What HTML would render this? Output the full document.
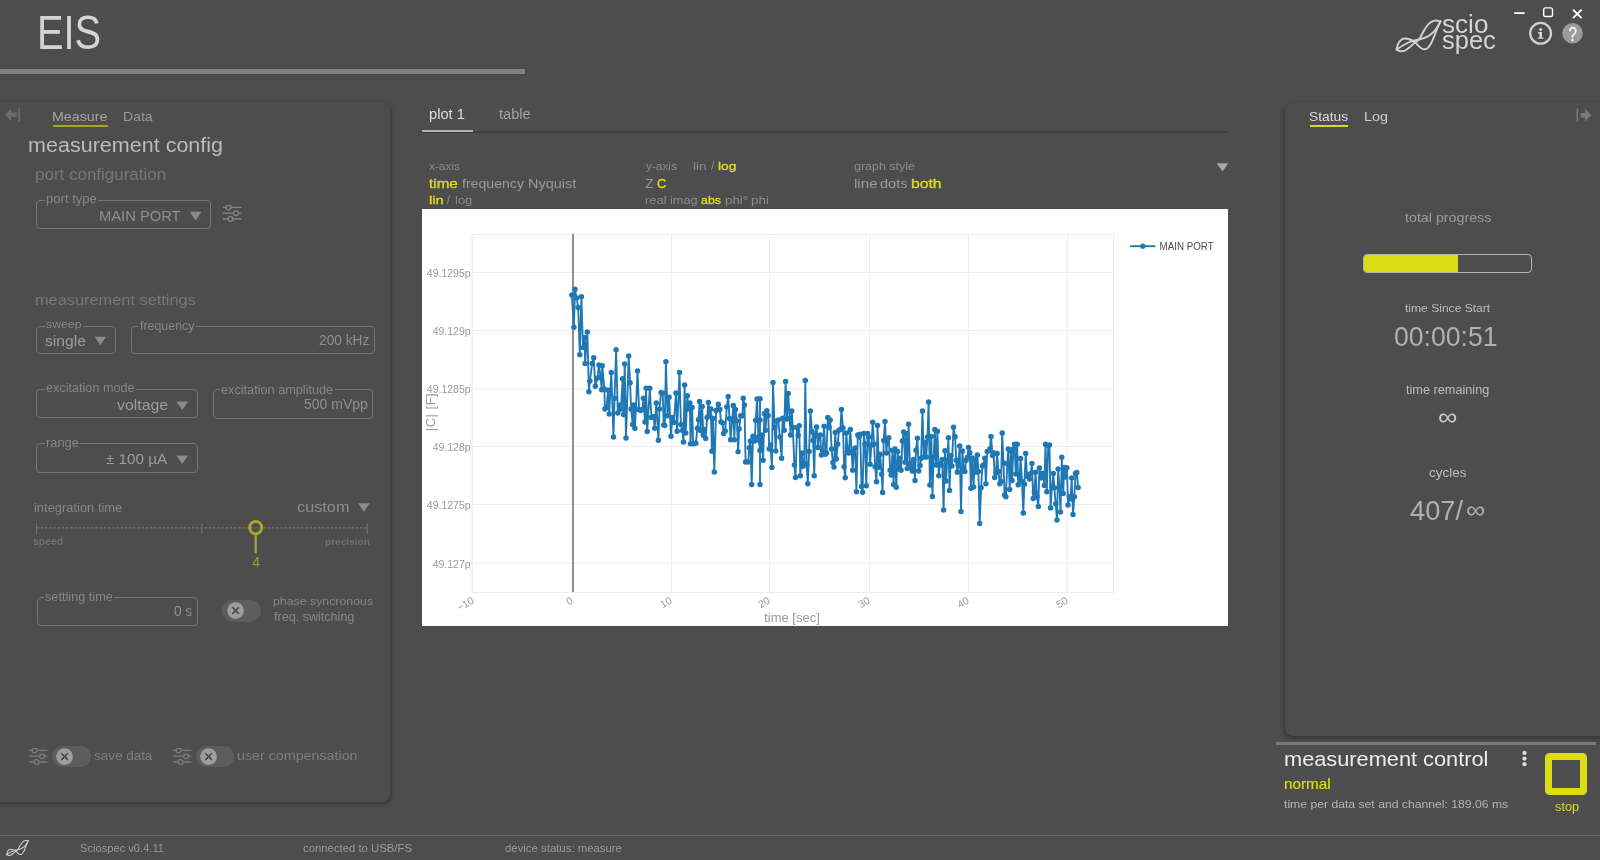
<!DOCTYPE html>
<html><head><meta charset="utf-8"><title>EIS</title>
<style>
*{box-sizing:border-box;margin:0;padding:0}
html,body{width:1600px;height:860px;overflow:hidden;background:#4d4d4d;font-family:"Liberation Sans",sans-serif;color:#bbb}
.a{position:absolute;white-space:nowrap;line-height:1}
.fs{position:absolute;border:1px solid #767676;border-radius:4px}
#w{position:absolute;left:0;top:0;width:1600px;height:860px;overflow:hidden;will-change:transform}
</style></head><body><div id="w">

<!-- header -->
<div class="a" style="left:36.62px;top:8px;font-size:48.5px;color:#d4d4d4;transform-origin:0 0;transform:scaleX(0.8206);">EIS</div>

<div class="a" style="left:-5px;top:69px;width:530px;height:5px;background:#838383;box-shadow:0 0 2px rgba(0,0,0,.25)"></div>

<!-- left panel -->
<div class="a" style="left:-10px;top:102px;width:400px;height:699.5px;background:#4d4d4d;border-radius:8px;box-shadow:1px 2px 5px rgba(0,0,0,.3)"></div>
<svg class="a" style="left:4px;top:107px" width="18" height="16" viewBox="0 0 18 16"><path d="M0.9,7.8L7.2,1.5V5.6H12.5V10H7.2V14.1Z" fill="#6c6c6c"/><path d="M15.1,1.2V14.6" stroke="#6c6c6c" stroke-width="1.6"/></svg>
<div class="a" style="left:52.26px;top:110px;font-size:13.5px;color:#a4a4a4;transform-origin:0 0;transform:scaleX(1.0551);">Measure</div>
<div class="a" style="left:53px;top:124.6px;width:54.5px;height:2px;background:#a9a32a"></div>
<div class="a" style="left:123.38px;top:110px;font-size:13.5px;color:#9a9a9a;transform-origin:0 0;transform:scaleX(1.0400);">Data</div>
<div class="a" style="left:27.60px;top:135px;font-size:20.5px;color:#bcbcbc;transform-origin:0 0;transform:scaleX(1.0504);">measurement config</div>
<div class="a" style="left:35.00px;top:167px;font-size:16.0px;color:#777;transform-origin:0 0;transform:scaleX(1.0607);">port configuration</div>
<div class="fs" style="left:36px;top:200px;width:175px;height:29px;border-color:#767676"></div>
<div class="a" style="left:45.3px;top:199px;width:52.9px;height:3px;background:#4d4d4d"></div>
<div class="a" style="left:46.05px;top:193px;font-size:12.5px;color:#868686;transform-origin:0 0;transform:scaleX(1.0462);">port type</div>
<div class="a" style="left:99.42px;top:208px;font-size:15.5px;color:#8e8e8e;transform-origin:0 0;transform:scaleX(0.9508);">MAIN PORT</div>
<svg class="a" style="left:188px;top:210px" width="15" height="12" viewBox="188 210 15 12"><path d="M189.7,211.7H201.6L195.64999999999998,220.5Z" fill="#8a8a8a"/></svg>
<svg class="a" style="left:222.6px;top:204.8px" width="19" height="17" viewBox="0 0 19 17" fill="none" stroke="#858585" stroke-width="1.3">
<path d="M0,2.4h3M8,2.4H18.5M0,8.2h10.5M15.5,8.2h3M0,14h5M10,14H18.5"/><circle cx="5.5" cy="2.4" r="2.4"/><circle cx="13" cy="8.2" r="2.4"/><circle cx="7.5" cy="14" r="2.4"/></svg>
<div class="a" style="left:35.04px;top:292px;font-size:15.5px;color:#777;transform-origin:0 0;transform:scaleX(1.0545);">measurement settings</div>
<div class="fs" style="left:36px;top:326px;width:80px;height:28px;border-color:#767676"></div>
<div class="a" style="left:45.0px;top:325px;width:38.1px;height:3px;background:#4d4d4d"></div>
<div class="a" style="left:46.29px;top:319px;font-size:11.5px;color:#868686;transform-origin:0 0;transform:scaleX(1.0681);">sweep</div>
<div class="a" style="left:44.81px;top:333px;font-size:15.0px;color:#9c9c9c;transform-origin:0 0;transform:scaleX(1.0452);">single</div>
<svg class="a" style="left:93px;top:335px" width="15" height="12" viewBox="93 335 15 12"><path d="M94.6,336.8H106L100.3,345.3Z" fill="#8a8a8a"/></svg>
<div class="fs" style="left:131px;top:326px;width:244px;height:28px;border-color:#767676"></div>
<div class="a" style="left:138.1px;top:325px;width:57.6px;height:3px;background:#4d4d4d"></div>
<div class="a" style="left:139.51px;top:320px;font-size:12.0px;color:#868686;transform-origin:0 0;transform:scaleX(1.0324);">frequency</div>
<div class="a" style="left:319.01px;top:333px;font-size:14.5px;color:#8e8e8e;transform-origin:0 0;transform:scaleX(0.9466);">200 kHz</div>
<div class="fs" style="left:36px;top:389px;width:162px;height:29px;border-color:#767676"></div>
<div class="a" style="left:45.0px;top:388px;width:91.0px;height:3px;background:#4d4d4d"></div>
<div class="a" style="left:46.09px;top:382px;font-size:12.0px;color:#868686;transform-origin:0 0;transform:scaleX(1.0542);">excitation mode</div>
<div class="a" style="left:116.82px;top:397px;font-size:15.0px;color:#9c9c9c;transform-origin:0 0;transform:scaleX(1.0566);">voltage</div>
<svg class="a" style="left:175px;top:400px" width="15" height="12" viewBox="175 400 15 12"><path d="M176.3,401.4H188.2L182.25,410Z" fill="#8a8a8a"/></svg>
<div class="fs" style="left:213px;top:389px;width:160px;height:30px;border-color:#767676"></div>
<div class="a" style="left:220.3px;top:388px;width:114.5px;height:3px;background:#4d4d4d"></div>
<div class="a" style="left:221.39px;top:384px;font-size:12.0px;color:#868686;transform-origin:0 0;transform:scaleX(1.0575);">excitation amplitude</div>
<div class="a" style="left:303.94px;top:397px;font-size:14.5px;color:#8e8e8e;transform-origin:0 0;transform:scaleX(0.9652);">500 mVpp</div>
<div class="fs" style="left:36px;top:443px;width:162px;height:30px;border-color:#767676"></div>
<div class="a" style="left:45.0px;top:442px;width:34.8px;height:3px;background:#4d4d4d"></div>
<div class="a" style="left:45.77px;top:437px;font-size:12.0px;color:#868686;transform-origin:0 0;transform:scaleX(1.0680);">range</div>
<div class="a" style="left:106.04px;top:451px;font-size:15px;color:#9c9c9c;transform-origin:0 0;transform:scaleX(1.0171);">± 100 µA</div>
<svg class="a" style="left:175px;top:454px" width="15" height="12" viewBox="175 454 15 12"><path d="M176.3,455.5H188.2L182.25,464Z" fill="#8a8a8a"/></svg>
<div class="a" style="left:34.36px;top:502px;font-size:12.5px;color:#868686;transform-origin:0 0;transform:scaleX(1.0330);">integration time</div>
<div class="a" style="left:296.75px;top:499px;font-size:15.5px;color:#8e8e8e;transform-origin:0 0;transform:scaleX(1.0505);">custom</div>
<svg class="a" style="left:357px;top:502px" width="15" height="12" viewBox="357 502 15 12"><path d="M358.2,503.3H369.6L363.9,511.9Z" fill="#8a8a8a"/></svg>
<svg class="a" style="left:30px;top:518px" width="345" height="56" viewBox="30 518 345 56" fill="none">
<path d="M36.6,527.9H367.2" stroke="#757575" stroke-width="1.2" stroke-dasharray="2.4 1.8"/>
<path d="M36.6,523.5v10.5M201.9,523.5v10.5M367.2,523.5v10.5" stroke="#777" stroke-width="1"/>
<path d="M255.7,534.5V553.3" stroke="#a9a628" stroke-width="2.2"/>
<circle cx="255.7" cy="527.6" r="6.1" stroke="#a9a628" stroke-width="2.9"/>
</svg>
<div class="a" style="left:252.30px;top:555px;font-size:14px;color:#a09d2e;transform-origin:0 0;">4</div>
<div class="a" style="left:32.94px;top:537px;font-size:10.0px;color:#6e6e6e;transform-origin:0 0;transform:scaleX(1.0394);font-weight:bold;">speed</div>
<div class="a" style="left:324.74px;top:537px;font-size:9.5px;color:#6e6e6e;transform-origin:0 0;transform:scaleX(1.0648);font-weight:bold;">precision</div>
<div class="fs" style="left:37px;top:597px;width:161px;height:29px;border-color:#767676"></div>
<div class="a" style="left:43.6px;top:596px;width:70.4px;height:3px;background:#4d4d4d"></div>
<div class="a" style="left:44.88px;top:591px;font-size:12.0px;color:#868686;transform-origin:0 0;transform:scaleX(1.0595);">settling time</div>
<div class="a" style="left:173.86px;top:604px;font-size:14.5px;color:#8e8e8e;transform-origin:0 0;transform:scaleX(0.9360);">0 s</div>
<div class="a" style="left:222.4px;top:600.2px;width:38.5px;height:21.6px;border-radius:11px;background:#5d5d5d"></div>
<svg class="a" style="left:226.5px;top:601.9000000000001px" width="18" height="18" viewBox="0 0 18 18"><circle cx="8.6" cy="8.6" r="8.4" fill="#9d9d9d"/><path d="M5.3,5.3l6.6,6.6M11.9,5.3l-6.6,6.6" stroke="#474747" stroke-width="1.6" fill="none"/></svg>
<div class="a" style="left:273.30px;top:596px;font-size:11.5px;color:#868686;transform-origin:0 0;transform:scaleX(1.0719);">phase syncronous</div>
<div class="a" style="left:273.91px;top:611px;font-size:12.0px;color:#868686;transform-origin:0 0;transform:scaleX(1.0478);">freq. switching</div>
<svg class="a" style="left:29.3px;top:747.5px" width="19" height="17" viewBox="0 0 19 17" fill="none" stroke="#7c7c7c" stroke-width="1.3">
<path d="M0,2.4h3M8,2.4H18.5M0,8.2h10.5M15.5,8.2h3M0,14h5M10,14H18.5"/><circle cx="5.5" cy="2.4" r="2.4"/><circle cx="13" cy="8.2" r="2.4"/><circle cx="7.5" cy="14" r="2.4"/></svg>
<div class="a" style="left:52.3px;top:745.9px;width:38.5px;height:21.6px;border-radius:11px;background:#5d5d5d"></div>
<svg class="a" style="left:56.4px;top:747.6px" width="18" height="18" viewBox="0 0 18 18"><circle cx="8.6" cy="8.6" r="8.4" fill="#9d9d9d"/><path d="M5.3,5.3l6.6,6.6M11.9,5.3l-6.6,6.6" stroke="#474747" stroke-width="1.6" fill="none"/></svg>
<div class="a" style="left:94.16px;top:749px;font-size:13.0px;color:#7e7e7e;transform-origin:0 0;transform:scaleX(1.0352);">save data</div>
<svg class="a" style="left:172.8px;top:747.5px" width="19" height="17" viewBox="0 0 19 17" fill="none" stroke="#7c7c7c" stroke-width="1.3">
<path d="M0,2.4h3M8,2.4H18.5M0,8.2h10.5M15.5,8.2h3M0,14h5M10,14H18.5"/><circle cx="5.5" cy="2.4" r="2.4"/><circle cx="13" cy="8.2" r="2.4"/><circle cx="7.5" cy="14" r="2.4"/></svg>
<div class="a" style="left:195.8px;top:745.9px;width:38.5px;height:21.6px;border-radius:11px;background:#5d5d5d"></div>
<svg class="a" style="left:199.9px;top:747.6px" width="18" height="18" viewBox="0 0 18 18"><circle cx="8.6" cy="8.6" r="8.4" fill="#9d9d9d"/><path d="M5.3,5.3l6.6,6.6M11.9,5.3l-6.6,6.6" stroke="#474747" stroke-width="1.6" fill="none"/></svg>
<div class="a" style="left:236.57px;top:749px;font-size:13.5px;color:#7e7e7e;transform-origin:0 0;transform:scaleX(1.0568);">user compensation</div>


<!-- center -->
<div class="a" style="left:429.05px;top:107px;font-size:14.0px;color:#dedede;transform-origin:0 0;transform:scaleX(1.0462);">plot 1</div>
<div class="a" style="left:498.68px;top:107px;font-size:14.0px;color:#a0a0a0;transform-origin:0 0;transform:scaleX(1.0427);">table</div>
<div class="a" style="left:421px;top:131.4px;width:807px;height:1.4px;background:#3d3d3d"></div>
<div class="a" style="left:421.9px;top:130.4px;width:51.3px;height:2px;background:#b0b0b0"></div>
<div class="a" style="left:429.38px;top:161px;font-size:11.5px;color:#8c8c8c;transform-origin:0 0;transform:scaleX(1.0306);">x-axis</div>
<div class="a" style="left:429.27px;top:177px;font-size:13.5px;color:#dcdc1e;transform-origin:0 0;transform:scaleX(1.1303);-webkit-text-stroke:0.35px #dcdc1e;">time</div>
<div class="a" style="left:462.09px;top:177px;font-size:13.5px;color:#9a9a9a;transform-origin:0 0;transform:scaleX(1.0447);">frequency</div>
<div class="a" style="left:527.64px;top:177px;font-size:13.5px;color:#9a9a9a;transform-origin:0 0;transform:scaleX(1.0729);">Nyquist</div>
<div class="a" style="left:428.54px;top:195px;font-size:11.5px;color:#dcdc1e;transform-origin:0 0;transform:scaleX(1.2794);-webkit-text-stroke:0.35px #dcdc1e;">lin</div>
<div class="a" style="left:446.82px;top:194px;font-size:12px;color:#8c8c8c;transform-origin:0 0;">/</div>
<div class="a" style="left:454.76px;top:195px;font-size:11.5px;color:#8c8c8c;transform-origin:0 0;transform:scaleX(1.1283);">log</div>
<div class="a" style="left:645.60px;top:161px;font-size:11.5px;color:#8c8c8c;transform-origin:0 0;transform:scaleX(1.0266);">y-axis</div>
<div class="a" style="left:692.71px;top:161px;font-size:11.5px;color:#8c8c8c;transform-origin:0 0;transform:scaleX(1.1894);">lin</div>
<div class="a" style="left:710.92px;top:160px;font-size:12px;color:#8c8c8c;transform-origin:0 0;">/</div>
<div class="a" style="left:717.91px;top:161px;font-size:11.5px;color:#dcdc1e;transform-origin:0 0;transform:scaleX(1.1930);-webkit-text-stroke:0.35px #dcdc1e;">log</div>
<div class="a" style="left:645.33px;top:177px;font-size:13.5px;color:#9a9a9a;transform-origin:0 0;">Z</div>
<div class="a" style="left:657.02px;top:177px;font-size:13px;color:#dcdc1e;transform-origin:0 0;-webkit-text-stroke:0.35px #dcdc1e;">C</div>
<div class="a" style="left:645.26px;top:195px;font-size:11.5px;color:#8c8c8c;transform-origin:0 0;transform:scaleX(1.1273);">real</div>
<div class="a" style="left:669.97px;top:195px;font-size:11.5px;color:#8c8c8c;transform-origin:0 0;transform:scaleX(1.1125);">imag</div>
<div class="a" style="left:701.20px;top:195px;font-size:11.5px;color:#dcdc1e;transform-origin:0 0;transform:scaleX(1.0763);-webkit-text-stroke:0.35px #dcdc1e;">abs</div>
<div class="a" style="left:724.54px;top:195px;font-size:11.5px;color:#8c8c8c;transform-origin:0 0;transform:scaleX(1.1558);">phi°</div>
<div class="a" style="left:751.12px;top:195px;font-size:11.5px;color:#8c8c8c;transform-origin:0 0;transform:scaleX(1.1739);">phi</div>
<div class="a" style="left:853.50px;top:161px;font-size:11.5px;color:#8c8c8c;transform-origin:0 0;transform:scaleX(1.0847);">graph style</div>
<div class="a" style="left:853.51px;top:177px;font-size:13.5px;color:#9a9a9a;transform-origin:0 0;transform:scaleX(1.1239);">line</div>
<div class="a" style="left:880.42px;top:177px;font-size:13.5px;color:#9a9a9a;transform-origin:0 0;transform:scaleX(1.0815);">dots</div>
<div class="a" style="left:911.48px;top:177px;font-size:13.5px;color:#dcdc1e;transform-origin:0 0;transform:scaleX(1.1631);-webkit-text-stroke:0.35px #dcdc1e;">both</div>
<svg class="a" style="left:1215px;top:162px" width="15" height="12" viewBox="1215 162 15 12"><path d="M1216.8,163.2H1228.2L1222.5,171.6Z" fill="#a8a8a8"/></svg>


<!-- chart -->
<div class="a" style="left:422px;top:208.7px;width:805.5px;height:417.2px;background:#fff"></div>
<svg class="a" style="left:422px;top:209px" width="805" height="417" viewBox="422 209 805 417">
<g stroke="#eeeeee" stroke-width="1" fill="none">
<path d="M470.9,234v358M472.6,234v358M671.5,234v358M769.5,234v358M869.5,234v358M968.5,234v358M1067.5,234v358M1113.5,234v358"/>
<path d="M472,234.5h642M472,272.5h642M472,330.5h642M472,388.5h642M472,446.5h642M472,504.5h642M472,563.5h642M472,592.5h642"/>
</g>
<path d="M573,234v358" stroke="#6c6c6c" stroke-width="1.5" fill="none"/>
<polyline points="571.8,294.9 573.9,327.2 575.0,289.3 576.6,298.1 578.2,307.4 579.8,354.8 581.4,296.7 583.0,347.5 584.6,337.4 585.1,363.6 587.3,332.0 588.9,391.7 589.9,381.0 592.1,363.6 593.7,357.7 595.3,386.3 597.4,378.3 599.0,364.9 600.6,377.0 601.7,389.8 602.2,365.7 604.4,389.0 604.9,409.0 606.5,407.7 608.1,390.3 609.2,413.9 611.3,372.4 613.5,437.1 614.5,398.3 616.1,349.7 617.8,413.0 619.9,405.0 621.0,409.0 622.6,378.8 623.6,414.4 624.7,364.1 626.0,437.9 628.7,356.1 630.1,382.8 631.1,409.0 632.7,424.5 633.8,405.0 634.9,428.3 635.9,409.0 637.5,371.1 639.1,409.8 640.7,410.4 642.4,409.6 643.4,398.3 645.0,421.9 646.1,388.2 647.2,431.5 649.8,388.2 651.4,417.6 653.6,416.5 654.7,428.3 656.3,402.9 658.4,440.3 659.5,409.0 661.1,392.5 662.7,393.0 663.7,425.1 664.8,425.6 665.9,361.7 667.5,415.7 669.1,397.3 671.0,436.3 672.3,417.6 673.9,422.4 676.0,393.0 677.1,431.2 679.5,372.4 680.9,424.5 682.5,430.4 683.5,441.9 684.6,385.0 685.7,433.1 687.3,395.7 688.3,409.0 689.9,402.9 690.5,443.8 692.1,407.4 693.2,443.8 695.8,443.3 697.4,428.3 698.5,419.7 699.6,401.6 700.6,430.4 702.2,406.4 703.3,435.2 704.4,429.6 705.7,438.4 707.1,417.6 708.4,402.4 709.7,415.7 710.8,409.0 711.9,451.3 712.9,418.4 714.3,471.9 716.1,410.4 718.3,404.2 719.9,409.6 721.0,421.9 722.6,422.9 723.6,433.6 725.2,431.0 726.8,406.9 728.2,396.5 729.5,418.4 730.6,439.8 732.2,419.7 733.3,405.6 734.3,439.8 735.4,409.6 737.0,421.1 738.1,451.8 739.1,429.1 740.7,415.7 742.4,415.7 743.2,398.3 744.5,405.0 745.6,462.0 748.2,462.0 749.3,447.8 750.4,441.1 751.7,484.4 753.0,436.3 754.7,441.1 755.7,420.3 757.1,398.9 758.4,437.1 760.0,450.5 760.0,440.9 760.0,484.5 760.0,436.1 760.0,440.9 760.0,420.1 760.0,398.7 760.0,436.9 760.2,450.3 761.8,435.0 763.1,460.2 764.4,413.4 765.5,430.2 766.8,410.7 768.2,415.5 769.3,448.9 770.6,444.9 771.9,467.6 773.0,382.4 774.6,427.5 775.7,451.1 776.7,420.9 778.3,420.1 779.9,436.9 781.6,458.3 782.6,418.2 784.2,430.2 785.6,381.6 786.9,419.0 788.2,393.6 789.6,418.2 790.6,435.0 791.7,411.0 792.8,427.5 794.4,465.0 795.5,477.5 797.1,427.5 798.1,435.6 799.2,425.7 800.3,475.7 801.9,452.9 802.9,466.3 804.3,463.6 805.3,380.5 806.7,465.0 807.8,483.7 809.1,451.6 810.4,411.0 812.0,431.6 813.1,440.4 814.2,475.7 815.2,435.6 816.6,427.0 817.9,447.6 819.0,435.6 820.3,435.0 821.4,455.1 822.7,451.1 824.1,426.2 825.4,454.3 826.5,452.9 827.8,417.4 829.1,427.5 830.2,420.1 831.6,448.9 832.9,462.8 834.0,467.1 835.3,432.4 836.4,459.1 837.7,444.1 839.0,430.2 840.4,429.4 841.4,409.4 843.0,428.1 844.1,466.8 845.2,477.8 846.3,432.9 847.6,451.6 848.9,452.9 850.3,429.4 851.6,451.6 852.7,470.3 853.7,452.9 855.1,448.1 856.4,491.7 857.8,435.0 859.1,436.9 860.2,434.2 861.5,486.4 862.6,492.2 863.9,433.4 865.0,444.1 866.3,485.8 867.6,433.4 868.7,436.9 870.1,464.2 871.4,444.9 872.7,422.2 874.1,444.1 875.1,466.8 876.5,481.8 877.5,425.4 878.9,467.6 880.2,454.3 881.6,474.3 882.6,492.5 883.7,440.4 885.0,421.4 886.4,452.9 887.4,440.9 888.8,437.7 890.1,470.3 891.2,475.1 892.5,450.3 893.6,484.5 894.9,448.9 896.3,487.2 897.6,451.6 898.7,469.0 900.0,458.3 901.1,470.3 902.4,440.9 903.7,432.1 905.1,462.3 906.1,433.4 907.2,468.4 908.6,424.3 909.9,463.6 911.2,467.6 912.3,470.9 913.6,459.6 915.0,480.5 916.0,450.3 917.4,438.2 918.7,471.1 920.1,465.5 921.1,458.3 922.5,411.0 923.8,457.0 925.1,442.2 926.2,457.0 927.5,436.9 928.6,401.9 929.9,485.0 931.3,436.4 932.4,496.5 933.7,457.0 934.8,429.4 936.1,465.0 937.4,431.3 938.8,475.7 939.8,463.6 941.2,465.0 942.2,459.6 943.6,509.9 944.9,450.8 946.0,481.0 947.3,460.2 948.4,437.7 949.5,490.4 950.9,455.4 951.9,466.1 953.5,427.3 955.1,436.7 956.2,460.2 957.3,472.2 958.3,465.0 959.7,446.0 961.0,511.6 962.4,450.9 963.7,468.2 964.8,471.4 966.1,460.2 967.4,457.5 968.5,447.4 969.8,452.7 970.9,488.3 972.2,458.1 973.6,487.0 974.7,459.7 976.0,472.2 977.3,454.9 978.4,471.4 979.7,523.6 981.1,487.8 982.4,466.1 983.5,465.0 984.8,458.3 985.9,483.7 987.2,451.4 988.6,450.9 989.9,449.0 991.0,436.4 992.6,455.4 993.6,452.7 994.7,477.6 996.0,473.0 997.1,453.5 998.4,471.4 999.8,483.7 1001.1,481.6 1002.2,432.9 1003.5,462.9 1004.6,495.0 1005.9,496.8 1007.3,463.7 1008.3,449.0 1009.7,489.6 1011.0,450.9 1012.1,480.5 1013.4,449.0 1014.5,444.2 1015.8,474.1 1017.2,444.2 1018.2,484.8 1019.6,476.8 1020.6,458.6 1022.0,481.6 1023.3,512.9 1024.4,484.3 1025.7,453.5 1027.1,476.3 1028.1,474.9 1029.5,478.9 1030.8,473.6 1031.9,463.4 1033.2,498.4 1034.3,492.3 1035.6,472.2 1037.0,496.8 1038.3,506.5 1039.4,468.0 1040.7,477.9 1041.8,473.6 1043.1,473.6 1044.4,485.6 1045.5,444.2 1046.8,491.8 1048.2,445.5 1049.5,445.0 1050.6,507.8 1051.9,487.0 1053.3,473.6 1054.3,487.8 1055.7,503.8 1057.0,520.1 1058.1,469.0 1059.4,487.0 1060.5,512.1 1061.8,457.3 1063.2,493.6 1064.2,467.4 1065.6,477.1 1066.9,467.7 1068.0,505.1 1069.3,496.8 1070.6,499.0 1071.7,478.1 1073.0,514.5 1074.4,496.8 1075.5,473.6 1076.8,472.5 1078.1,487.5" fill="none" stroke="#1f77b4" stroke-width="1.85" stroke-linejoin="round"/>
<path d="M569.05,294.9a2.75,2.75 0 1,0 5.5,0a2.75,2.75 0 1,0 -5.5,0M571.15,327.2a2.75,2.75 0 1,0 5.5,0a2.75,2.75 0 1,0 -5.5,0M572.25,289.3a2.75,2.75 0 1,0 5.5,0a2.75,2.75 0 1,0 -5.5,0M573.85,298.1a2.75,2.75 0 1,0 5.5,0a2.75,2.75 0 1,0 -5.5,0M575.45,307.4a2.75,2.75 0 1,0 5.5,0a2.75,2.75 0 1,0 -5.5,0M577.05,354.8a2.75,2.75 0 1,0 5.5,0a2.75,2.75 0 1,0 -5.5,0M578.65,296.7a2.75,2.75 0 1,0 5.5,0a2.75,2.75 0 1,0 -5.5,0M580.25,347.5a2.75,2.75 0 1,0 5.5,0a2.75,2.75 0 1,0 -5.5,0M581.85,337.4a2.75,2.75 0 1,0 5.5,0a2.75,2.75 0 1,0 -5.5,0M582.35,363.6a2.75,2.75 0 1,0 5.5,0a2.75,2.75 0 1,0 -5.5,0M584.55,332.0a2.75,2.75 0 1,0 5.5,0a2.75,2.75 0 1,0 -5.5,0M586.15,391.7a2.75,2.75 0 1,0 5.5,0a2.75,2.75 0 1,0 -5.5,0M587.15,381.0a2.75,2.75 0 1,0 5.5,0a2.75,2.75 0 1,0 -5.5,0M589.35,363.6a2.75,2.75 0 1,0 5.5,0a2.75,2.75 0 1,0 -5.5,0M590.95,357.7a2.75,2.75 0 1,0 5.5,0a2.75,2.75 0 1,0 -5.5,0M592.55,386.3a2.75,2.75 0 1,0 5.5,0a2.75,2.75 0 1,0 -5.5,0M594.65,378.3a2.75,2.75 0 1,0 5.5,0a2.75,2.75 0 1,0 -5.5,0M596.25,364.9a2.75,2.75 0 1,0 5.5,0a2.75,2.75 0 1,0 -5.5,0M597.85,377.0a2.75,2.75 0 1,0 5.5,0a2.75,2.75 0 1,0 -5.5,0M598.95,389.8a2.75,2.75 0 1,0 5.5,0a2.75,2.75 0 1,0 -5.5,0M599.45,365.7a2.75,2.75 0 1,0 5.5,0a2.75,2.75 0 1,0 -5.5,0M601.65,389.0a2.75,2.75 0 1,0 5.5,0a2.75,2.75 0 1,0 -5.5,0M602.15,409.0a2.75,2.75 0 1,0 5.5,0a2.75,2.75 0 1,0 -5.5,0M603.75,407.7a2.75,2.75 0 1,0 5.5,0a2.75,2.75 0 1,0 -5.5,0M605.35,390.3a2.75,2.75 0 1,0 5.5,0a2.75,2.75 0 1,0 -5.5,0M606.45,413.9a2.75,2.75 0 1,0 5.5,0a2.75,2.75 0 1,0 -5.5,0M608.55,372.4a2.75,2.75 0 1,0 5.5,0a2.75,2.75 0 1,0 -5.5,0M610.75,437.1a2.75,2.75 0 1,0 5.5,0a2.75,2.75 0 1,0 -5.5,0M611.75,398.3a2.75,2.75 0 1,0 5.5,0a2.75,2.75 0 1,0 -5.5,0M613.35,349.7a2.75,2.75 0 1,0 5.5,0a2.75,2.75 0 1,0 -5.5,0M615.05,413.0a2.75,2.75 0 1,0 5.5,0a2.75,2.75 0 1,0 -5.5,0M617.15,405.0a2.75,2.75 0 1,0 5.5,0a2.75,2.75 0 1,0 -5.5,0M618.25,409.0a2.75,2.75 0 1,0 5.5,0a2.75,2.75 0 1,0 -5.5,0M619.85,378.8a2.75,2.75 0 1,0 5.5,0a2.75,2.75 0 1,0 -5.5,0M620.85,414.4a2.75,2.75 0 1,0 5.5,0a2.75,2.75 0 1,0 -5.5,0M621.95,364.1a2.75,2.75 0 1,0 5.5,0a2.75,2.75 0 1,0 -5.5,0M623.25,437.9a2.75,2.75 0 1,0 5.5,0a2.75,2.75 0 1,0 -5.5,0M625.95,356.1a2.75,2.75 0 1,0 5.5,0a2.75,2.75 0 1,0 -5.5,0M627.35,382.8a2.75,2.75 0 1,0 5.5,0a2.75,2.75 0 1,0 -5.5,0M628.35,409.0a2.75,2.75 0 1,0 5.5,0a2.75,2.75 0 1,0 -5.5,0M629.95,424.5a2.75,2.75 0 1,0 5.5,0a2.75,2.75 0 1,0 -5.5,0M631.05,405.0a2.75,2.75 0 1,0 5.5,0a2.75,2.75 0 1,0 -5.5,0M632.15,428.3a2.75,2.75 0 1,0 5.5,0a2.75,2.75 0 1,0 -5.5,0M633.15,409.0a2.75,2.75 0 1,0 5.5,0a2.75,2.75 0 1,0 -5.5,0M634.75,371.1a2.75,2.75 0 1,0 5.5,0a2.75,2.75 0 1,0 -5.5,0M636.35,409.8a2.75,2.75 0 1,0 5.5,0a2.75,2.75 0 1,0 -5.5,0M637.95,410.4a2.75,2.75 0 1,0 5.5,0a2.75,2.75 0 1,0 -5.5,0M639.65,409.6a2.75,2.75 0 1,0 5.5,0a2.75,2.75 0 1,0 -5.5,0M640.65,398.3a2.75,2.75 0 1,0 5.5,0a2.75,2.75 0 1,0 -5.5,0M642.25,421.9a2.75,2.75 0 1,0 5.5,0a2.75,2.75 0 1,0 -5.5,0M643.35,388.2a2.75,2.75 0 1,0 5.5,0a2.75,2.75 0 1,0 -5.5,0M644.45,431.5a2.75,2.75 0 1,0 5.5,0a2.75,2.75 0 1,0 -5.5,0M647.05,388.2a2.75,2.75 0 1,0 5.5,0a2.75,2.75 0 1,0 -5.5,0M648.65,417.6a2.75,2.75 0 1,0 5.5,0a2.75,2.75 0 1,0 -5.5,0M650.85,416.5a2.75,2.75 0 1,0 5.5,0a2.75,2.75 0 1,0 -5.5,0M651.95,428.3a2.75,2.75 0 1,0 5.5,0a2.75,2.75 0 1,0 -5.5,0M653.55,402.9a2.75,2.75 0 1,0 5.5,0a2.75,2.75 0 1,0 -5.5,0M655.65,440.3a2.75,2.75 0 1,0 5.5,0a2.75,2.75 0 1,0 -5.5,0M656.75,409.0a2.75,2.75 0 1,0 5.5,0a2.75,2.75 0 1,0 -5.5,0M658.35,392.5a2.75,2.75 0 1,0 5.5,0a2.75,2.75 0 1,0 -5.5,0M659.95,393.0a2.75,2.75 0 1,0 5.5,0a2.75,2.75 0 1,0 -5.5,0M660.95,425.1a2.75,2.75 0 1,0 5.5,0a2.75,2.75 0 1,0 -5.5,0M662.05,425.6a2.75,2.75 0 1,0 5.5,0a2.75,2.75 0 1,0 -5.5,0M663.15,361.7a2.75,2.75 0 1,0 5.5,0a2.75,2.75 0 1,0 -5.5,0M664.75,415.7a2.75,2.75 0 1,0 5.5,0a2.75,2.75 0 1,0 -5.5,0M666.35,397.3a2.75,2.75 0 1,0 5.5,0a2.75,2.75 0 1,0 -5.5,0M668.25,436.3a2.75,2.75 0 1,0 5.5,0a2.75,2.75 0 1,0 -5.5,0M669.55,417.6a2.75,2.75 0 1,0 5.5,0a2.75,2.75 0 1,0 -5.5,0M671.15,422.4a2.75,2.75 0 1,0 5.5,0a2.75,2.75 0 1,0 -5.5,0M673.25,393.0a2.75,2.75 0 1,0 5.5,0a2.75,2.75 0 1,0 -5.5,0M674.35,431.2a2.75,2.75 0 1,0 5.5,0a2.75,2.75 0 1,0 -5.5,0M676.75,372.4a2.75,2.75 0 1,0 5.5,0a2.75,2.75 0 1,0 -5.5,0M678.15,424.5a2.75,2.75 0 1,0 5.5,0a2.75,2.75 0 1,0 -5.5,0M679.75,430.4a2.75,2.75 0 1,0 5.5,0a2.75,2.75 0 1,0 -5.5,0M680.75,441.9a2.75,2.75 0 1,0 5.5,0a2.75,2.75 0 1,0 -5.5,0M681.85,385.0a2.75,2.75 0 1,0 5.5,0a2.75,2.75 0 1,0 -5.5,0M682.95,433.1a2.75,2.75 0 1,0 5.5,0a2.75,2.75 0 1,0 -5.5,0M684.55,395.7a2.75,2.75 0 1,0 5.5,0a2.75,2.75 0 1,0 -5.5,0M685.55,409.0a2.75,2.75 0 1,0 5.5,0a2.75,2.75 0 1,0 -5.5,0M687.15,402.9a2.75,2.75 0 1,0 5.5,0a2.75,2.75 0 1,0 -5.5,0M687.75,443.8a2.75,2.75 0 1,0 5.5,0a2.75,2.75 0 1,0 -5.5,0M689.35,407.4a2.75,2.75 0 1,0 5.5,0a2.75,2.75 0 1,0 -5.5,0M690.45,443.8a2.75,2.75 0 1,0 5.5,0a2.75,2.75 0 1,0 -5.5,0M693.05,443.3a2.75,2.75 0 1,0 5.5,0a2.75,2.75 0 1,0 -5.5,0M694.65,428.3a2.75,2.75 0 1,0 5.5,0a2.75,2.75 0 1,0 -5.5,0M695.75,419.7a2.75,2.75 0 1,0 5.5,0a2.75,2.75 0 1,0 -5.5,0M696.85,401.6a2.75,2.75 0 1,0 5.5,0a2.75,2.75 0 1,0 -5.5,0M697.85,430.4a2.75,2.75 0 1,0 5.5,0a2.75,2.75 0 1,0 -5.5,0M699.45,406.4a2.75,2.75 0 1,0 5.5,0a2.75,2.75 0 1,0 -5.5,0M700.55,435.2a2.75,2.75 0 1,0 5.5,0a2.75,2.75 0 1,0 -5.5,0M701.65,429.6a2.75,2.75 0 1,0 5.5,0a2.75,2.75 0 1,0 -5.5,0M702.95,438.4a2.75,2.75 0 1,0 5.5,0a2.75,2.75 0 1,0 -5.5,0M704.35,417.6a2.75,2.75 0 1,0 5.5,0a2.75,2.75 0 1,0 -5.5,0M705.65,402.4a2.75,2.75 0 1,0 5.5,0a2.75,2.75 0 1,0 -5.5,0M706.95,415.7a2.75,2.75 0 1,0 5.5,0a2.75,2.75 0 1,0 -5.5,0M708.05,409.0a2.75,2.75 0 1,0 5.5,0a2.75,2.75 0 1,0 -5.5,0M709.15,451.3a2.75,2.75 0 1,0 5.5,0a2.75,2.75 0 1,0 -5.5,0M710.15,418.4a2.75,2.75 0 1,0 5.5,0a2.75,2.75 0 1,0 -5.5,0M711.55,471.9a2.75,2.75 0 1,0 5.5,0a2.75,2.75 0 1,0 -5.5,0M713.35,410.4a2.75,2.75 0 1,0 5.5,0a2.75,2.75 0 1,0 -5.5,0M715.55,404.2a2.75,2.75 0 1,0 5.5,0a2.75,2.75 0 1,0 -5.5,0M717.15,409.6a2.75,2.75 0 1,0 5.5,0a2.75,2.75 0 1,0 -5.5,0M718.25,421.9a2.75,2.75 0 1,0 5.5,0a2.75,2.75 0 1,0 -5.5,0M719.85,422.9a2.75,2.75 0 1,0 5.5,0a2.75,2.75 0 1,0 -5.5,0M720.85,433.6a2.75,2.75 0 1,0 5.5,0a2.75,2.75 0 1,0 -5.5,0M722.45,431.0a2.75,2.75 0 1,0 5.5,0a2.75,2.75 0 1,0 -5.5,0M724.05,406.9a2.75,2.75 0 1,0 5.5,0a2.75,2.75 0 1,0 -5.5,0M725.45,396.5a2.75,2.75 0 1,0 5.5,0a2.75,2.75 0 1,0 -5.5,0M726.75,418.4a2.75,2.75 0 1,0 5.5,0a2.75,2.75 0 1,0 -5.5,0M727.85,439.8a2.75,2.75 0 1,0 5.5,0a2.75,2.75 0 1,0 -5.5,0M729.45,419.7a2.75,2.75 0 1,0 5.5,0a2.75,2.75 0 1,0 -5.5,0M730.55,405.6a2.75,2.75 0 1,0 5.5,0a2.75,2.75 0 1,0 -5.5,0M731.55,439.8a2.75,2.75 0 1,0 5.5,0a2.75,2.75 0 1,0 -5.5,0M732.65,409.6a2.75,2.75 0 1,0 5.5,0a2.75,2.75 0 1,0 -5.5,0M734.25,421.1a2.75,2.75 0 1,0 5.5,0a2.75,2.75 0 1,0 -5.5,0M735.35,451.8a2.75,2.75 0 1,0 5.5,0a2.75,2.75 0 1,0 -5.5,0M736.35,429.1a2.75,2.75 0 1,0 5.5,0a2.75,2.75 0 1,0 -5.5,0M737.95,415.7a2.75,2.75 0 1,0 5.5,0a2.75,2.75 0 1,0 -5.5,0M739.65,415.7a2.75,2.75 0 1,0 5.5,0a2.75,2.75 0 1,0 -5.5,0M740.45,398.3a2.75,2.75 0 1,0 5.5,0a2.75,2.75 0 1,0 -5.5,0M741.75,405.0a2.75,2.75 0 1,0 5.5,0a2.75,2.75 0 1,0 -5.5,0M742.85,462.0a2.75,2.75 0 1,0 5.5,0a2.75,2.75 0 1,0 -5.5,0M745.45,462.0a2.75,2.75 0 1,0 5.5,0a2.75,2.75 0 1,0 -5.5,0M746.55,447.8a2.75,2.75 0 1,0 5.5,0a2.75,2.75 0 1,0 -5.5,0M747.65,441.1a2.75,2.75 0 1,0 5.5,0a2.75,2.75 0 1,0 -5.5,0M748.95,484.4a2.75,2.75 0 1,0 5.5,0a2.75,2.75 0 1,0 -5.5,0M750.25,436.3a2.75,2.75 0 1,0 5.5,0a2.75,2.75 0 1,0 -5.5,0M751.95,441.1a2.75,2.75 0 1,0 5.5,0a2.75,2.75 0 1,0 -5.5,0M752.95,420.3a2.75,2.75 0 1,0 5.5,0a2.75,2.75 0 1,0 -5.5,0M754.35,398.9a2.75,2.75 0 1,0 5.5,0a2.75,2.75 0 1,0 -5.5,0M755.65,437.1a2.75,2.75 0 1,0 5.5,0a2.75,2.75 0 1,0 -5.5,0M757.25,450.5a2.75,2.75 0 1,0 5.5,0a2.75,2.75 0 1,0 -5.5,0M757.25,440.9a2.75,2.75 0 1,0 5.5,0a2.75,2.75 0 1,0 -5.5,0M757.25,484.5a2.75,2.75 0 1,0 5.5,0a2.75,2.75 0 1,0 -5.5,0M757.25,436.1a2.75,2.75 0 1,0 5.5,0a2.75,2.75 0 1,0 -5.5,0M757.25,440.9a2.75,2.75 0 1,0 5.5,0a2.75,2.75 0 1,0 -5.5,0M757.25,420.1a2.75,2.75 0 1,0 5.5,0a2.75,2.75 0 1,0 -5.5,0M757.25,398.7a2.75,2.75 0 1,0 5.5,0a2.75,2.75 0 1,0 -5.5,0M757.25,436.9a2.75,2.75 0 1,0 5.5,0a2.75,2.75 0 1,0 -5.5,0M757.45,450.3a2.75,2.75 0 1,0 5.5,0a2.75,2.75 0 1,0 -5.5,0M759.05,435.0a2.75,2.75 0 1,0 5.5,0a2.75,2.75 0 1,0 -5.5,0M760.35,460.2a2.75,2.75 0 1,0 5.5,0a2.75,2.75 0 1,0 -5.5,0M761.65,413.4a2.75,2.75 0 1,0 5.5,0a2.75,2.75 0 1,0 -5.5,0M762.75,430.2a2.75,2.75 0 1,0 5.5,0a2.75,2.75 0 1,0 -5.5,0M764.05,410.7a2.75,2.75 0 1,0 5.5,0a2.75,2.75 0 1,0 -5.5,0M765.45,415.5a2.75,2.75 0 1,0 5.5,0a2.75,2.75 0 1,0 -5.5,0M766.55,448.9a2.75,2.75 0 1,0 5.5,0a2.75,2.75 0 1,0 -5.5,0M767.85,444.9a2.75,2.75 0 1,0 5.5,0a2.75,2.75 0 1,0 -5.5,0M769.15,467.6a2.75,2.75 0 1,0 5.5,0a2.75,2.75 0 1,0 -5.5,0M770.25,382.4a2.75,2.75 0 1,0 5.5,0a2.75,2.75 0 1,0 -5.5,0M771.85,427.5a2.75,2.75 0 1,0 5.5,0a2.75,2.75 0 1,0 -5.5,0M772.95,451.1a2.75,2.75 0 1,0 5.5,0a2.75,2.75 0 1,0 -5.5,0M773.95,420.9a2.75,2.75 0 1,0 5.5,0a2.75,2.75 0 1,0 -5.5,0M775.55,420.1a2.75,2.75 0 1,0 5.5,0a2.75,2.75 0 1,0 -5.5,0M777.15,436.9a2.75,2.75 0 1,0 5.5,0a2.75,2.75 0 1,0 -5.5,0M778.85,458.3a2.75,2.75 0 1,0 5.5,0a2.75,2.75 0 1,0 -5.5,0M779.85,418.2a2.75,2.75 0 1,0 5.5,0a2.75,2.75 0 1,0 -5.5,0M781.45,430.2a2.75,2.75 0 1,0 5.5,0a2.75,2.75 0 1,0 -5.5,0M782.85,381.6a2.75,2.75 0 1,0 5.5,0a2.75,2.75 0 1,0 -5.5,0M784.15,419.0a2.75,2.75 0 1,0 5.5,0a2.75,2.75 0 1,0 -5.5,0M785.45,393.6a2.75,2.75 0 1,0 5.5,0a2.75,2.75 0 1,0 -5.5,0M786.85,418.2a2.75,2.75 0 1,0 5.5,0a2.75,2.75 0 1,0 -5.5,0M787.85,435.0a2.75,2.75 0 1,0 5.5,0a2.75,2.75 0 1,0 -5.5,0M788.95,411.0a2.75,2.75 0 1,0 5.5,0a2.75,2.75 0 1,0 -5.5,0M790.05,427.5a2.75,2.75 0 1,0 5.5,0a2.75,2.75 0 1,0 -5.5,0M791.65,465.0a2.75,2.75 0 1,0 5.5,0a2.75,2.75 0 1,0 -5.5,0M792.75,477.5a2.75,2.75 0 1,0 5.5,0a2.75,2.75 0 1,0 -5.5,0M794.35,427.5a2.75,2.75 0 1,0 5.5,0a2.75,2.75 0 1,0 -5.5,0M795.35,435.6a2.75,2.75 0 1,0 5.5,0a2.75,2.75 0 1,0 -5.5,0M796.45,425.7a2.75,2.75 0 1,0 5.5,0a2.75,2.75 0 1,0 -5.5,0M797.55,475.7a2.75,2.75 0 1,0 5.5,0a2.75,2.75 0 1,0 -5.5,0M799.15,452.9a2.75,2.75 0 1,0 5.5,0a2.75,2.75 0 1,0 -5.5,0M800.15,466.3a2.75,2.75 0 1,0 5.5,0a2.75,2.75 0 1,0 -5.5,0M801.55,463.6a2.75,2.75 0 1,0 5.5,0a2.75,2.75 0 1,0 -5.5,0M802.55,380.5a2.75,2.75 0 1,0 5.5,0a2.75,2.75 0 1,0 -5.5,0M803.95,465.0a2.75,2.75 0 1,0 5.5,0a2.75,2.75 0 1,0 -5.5,0M805.05,483.7a2.75,2.75 0 1,0 5.5,0a2.75,2.75 0 1,0 -5.5,0M806.35,451.6a2.75,2.75 0 1,0 5.5,0a2.75,2.75 0 1,0 -5.5,0M807.65,411.0a2.75,2.75 0 1,0 5.5,0a2.75,2.75 0 1,0 -5.5,0M809.25,431.6a2.75,2.75 0 1,0 5.5,0a2.75,2.75 0 1,0 -5.5,0M810.35,440.4a2.75,2.75 0 1,0 5.5,0a2.75,2.75 0 1,0 -5.5,0M811.45,475.7a2.75,2.75 0 1,0 5.5,0a2.75,2.75 0 1,0 -5.5,0M812.45,435.6a2.75,2.75 0 1,0 5.5,0a2.75,2.75 0 1,0 -5.5,0M813.85,427.0a2.75,2.75 0 1,0 5.5,0a2.75,2.75 0 1,0 -5.5,0M815.15,447.6a2.75,2.75 0 1,0 5.5,0a2.75,2.75 0 1,0 -5.5,0M816.25,435.6a2.75,2.75 0 1,0 5.5,0a2.75,2.75 0 1,0 -5.5,0M817.55,435.0a2.75,2.75 0 1,0 5.5,0a2.75,2.75 0 1,0 -5.5,0M818.65,455.1a2.75,2.75 0 1,0 5.5,0a2.75,2.75 0 1,0 -5.5,0M819.95,451.1a2.75,2.75 0 1,0 5.5,0a2.75,2.75 0 1,0 -5.5,0M821.35,426.2a2.75,2.75 0 1,0 5.5,0a2.75,2.75 0 1,0 -5.5,0M822.65,454.3a2.75,2.75 0 1,0 5.5,0a2.75,2.75 0 1,0 -5.5,0M823.75,452.9a2.75,2.75 0 1,0 5.5,0a2.75,2.75 0 1,0 -5.5,0M825.05,417.4a2.75,2.75 0 1,0 5.5,0a2.75,2.75 0 1,0 -5.5,0M826.35,427.5a2.75,2.75 0 1,0 5.5,0a2.75,2.75 0 1,0 -5.5,0M827.45,420.1a2.75,2.75 0 1,0 5.5,0a2.75,2.75 0 1,0 -5.5,0M828.85,448.9a2.75,2.75 0 1,0 5.5,0a2.75,2.75 0 1,0 -5.5,0M830.15,462.8a2.75,2.75 0 1,0 5.5,0a2.75,2.75 0 1,0 -5.5,0M831.25,467.1a2.75,2.75 0 1,0 5.5,0a2.75,2.75 0 1,0 -5.5,0M832.55,432.4a2.75,2.75 0 1,0 5.5,0a2.75,2.75 0 1,0 -5.5,0M833.65,459.1a2.75,2.75 0 1,0 5.5,0a2.75,2.75 0 1,0 -5.5,0M834.95,444.1a2.75,2.75 0 1,0 5.5,0a2.75,2.75 0 1,0 -5.5,0M836.25,430.2a2.75,2.75 0 1,0 5.5,0a2.75,2.75 0 1,0 -5.5,0M837.65,429.4a2.75,2.75 0 1,0 5.5,0a2.75,2.75 0 1,0 -5.5,0M838.65,409.4a2.75,2.75 0 1,0 5.5,0a2.75,2.75 0 1,0 -5.5,0M840.25,428.1a2.75,2.75 0 1,0 5.5,0a2.75,2.75 0 1,0 -5.5,0M841.35,466.8a2.75,2.75 0 1,0 5.5,0a2.75,2.75 0 1,0 -5.5,0M842.45,477.8a2.75,2.75 0 1,0 5.5,0a2.75,2.75 0 1,0 -5.5,0M843.55,432.9a2.75,2.75 0 1,0 5.5,0a2.75,2.75 0 1,0 -5.5,0M844.85,451.6a2.75,2.75 0 1,0 5.5,0a2.75,2.75 0 1,0 -5.5,0M846.15,452.9a2.75,2.75 0 1,0 5.5,0a2.75,2.75 0 1,0 -5.5,0M847.55,429.4a2.75,2.75 0 1,0 5.5,0a2.75,2.75 0 1,0 -5.5,0M848.85,451.6a2.75,2.75 0 1,0 5.5,0a2.75,2.75 0 1,0 -5.5,0M849.95,470.3a2.75,2.75 0 1,0 5.5,0a2.75,2.75 0 1,0 -5.5,0M850.95,452.9a2.75,2.75 0 1,0 5.5,0a2.75,2.75 0 1,0 -5.5,0M852.35,448.1a2.75,2.75 0 1,0 5.5,0a2.75,2.75 0 1,0 -5.5,0M853.65,491.7a2.75,2.75 0 1,0 5.5,0a2.75,2.75 0 1,0 -5.5,0M855.05,435.0a2.75,2.75 0 1,0 5.5,0a2.75,2.75 0 1,0 -5.5,0M856.35,436.9a2.75,2.75 0 1,0 5.5,0a2.75,2.75 0 1,0 -5.5,0M857.45,434.2a2.75,2.75 0 1,0 5.5,0a2.75,2.75 0 1,0 -5.5,0M858.75,486.4a2.75,2.75 0 1,0 5.5,0a2.75,2.75 0 1,0 -5.5,0M859.85,492.2a2.75,2.75 0 1,0 5.5,0a2.75,2.75 0 1,0 -5.5,0M861.15,433.4a2.75,2.75 0 1,0 5.5,0a2.75,2.75 0 1,0 -5.5,0M862.25,444.1a2.75,2.75 0 1,0 5.5,0a2.75,2.75 0 1,0 -5.5,0M863.55,485.8a2.75,2.75 0 1,0 5.5,0a2.75,2.75 0 1,0 -5.5,0M864.85,433.4a2.75,2.75 0 1,0 5.5,0a2.75,2.75 0 1,0 -5.5,0M865.95,436.9a2.75,2.75 0 1,0 5.5,0a2.75,2.75 0 1,0 -5.5,0M867.35,464.2a2.75,2.75 0 1,0 5.5,0a2.75,2.75 0 1,0 -5.5,0M868.65,444.9a2.75,2.75 0 1,0 5.5,0a2.75,2.75 0 1,0 -5.5,0M869.95,422.2a2.75,2.75 0 1,0 5.5,0a2.75,2.75 0 1,0 -5.5,0M871.35,444.1a2.75,2.75 0 1,0 5.5,0a2.75,2.75 0 1,0 -5.5,0M872.35,466.8a2.75,2.75 0 1,0 5.5,0a2.75,2.75 0 1,0 -5.5,0M873.75,481.8a2.75,2.75 0 1,0 5.5,0a2.75,2.75 0 1,0 -5.5,0M874.75,425.4a2.75,2.75 0 1,0 5.5,0a2.75,2.75 0 1,0 -5.5,0M876.15,467.6a2.75,2.75 0 1,0 5.5,0a2.75,2.75 0 1,0 -5.5,0M877.45,454.3a2.75,2.75 0 1,0 5.5,0a2.75,2.75 0 1,0 -5.5,0M878.85,474.3a2.75,2.75 0 1,0 5.5,0a2.75,2.75 0 1,0 -5.5,0M879.85,492.5a2.75,2.75 0 1,0 5.5,0a2.75,2.75 0 1,0 -5.5,0M880.95,440.4a2.75,2.75 0 1,0 5.5,0a2.75,2.75 0 1,0 -5.5,0M882.25,421.4a2.75,2.75 0 1,0 5.5,0a2.75,2.75 0 1,0 -5.5,0M883.65,452.9a2.75,2.75 0 1,0 5.5,0a2.75,2.75 0 1,0 -5.5,0M884.65,440.9a2.75,2.75 0 1,0 5.5,0a2.75,2.75 0 1,0 -5.5,0M886.05,437.7a2.75,2.75 0 1,0 5.5,0a2.75,2.75 0 1,0 -5.5,0M887.35,470.3a2.75,2.75 0 1,0 5.5,0a2.75,2.75 0 1,0 -5.5,0M888.45,475.1a2.75,2.75 0 1,0 5.5,0a2.75,2.75 0 1,0 -5.5,0M889.75,450.3a2.75,2.75 0 1,0 5.5,0a2.75,2.75 0 1,0 -5.5,0M890.85,484.5a2.75,2.75 0 1,0 5.5,0a2.75,2.75 0 1,0 -5.5,0M892.15,448.9a2.75,2.75 0 1,0 5.5,0a2.75,2.75 0 1,0 -5.5,0M893.55,487.2a2.75,2.75 0 1,0 5.5,0a2.75,2.75 0 1,0 -5.5,0M894.85,451.6a2.75,2.75 0 1,0 5.5,0a2.75,2.75 0 1,0 -5.5,0M895.95,469.0a2.75,2.75 0 1,0 5.5,0a2.75,2.75 0 1,0 -5.5,0M897.25,458.3a2.75,2.75 0 1,0 5.5,0a2.75,2.75 0 1,0 -5.5,0M898.35,470.3a2.75,2.75 0 1,0 5.5,0a2.75,2.75 0 1,0 -5.5,0M899.65,440.9a2.75,2.75 0 1,0 5.5,0a2.75,2.75 0 1,0 -5.5,0M900.95,432.1a2.75,2.75 0 1,0 5.5,0a2.75,2.75 0 1,0 -5.5,0M902.35,462.3a2.75,2.75 0 1,0 5.5,0a2.75,2.75 0 1,0 -5.5,0M903.35,433.4a2.75,2.75 0 1,0 5.5,0a2.75,2.75 0 1,0 -5.5,0M904.45,468.4a2.75,2.75 0 1,0 5.5,0a2.75,2.75 0 1,0 -5.5,0M905.85,424.3a2.75,2.75 0 1,0 5.5,0a2.75,2.75 0 1,0 -5.5,0M907.15,463.6a2.75,2.75 0 1,0 5.5,0a2.75,2.75 0 1,0 -5.5,0M908.45,467.6a2.75,2.75 0 1,0 5.5,0a2.75,2.75 0 1,0 -5.5,0M909.55,470.9a2.75,2.75 0 1,0 5.5,0a2.75,2.75 0 1,0 -5.5,0M910.85,459.6a2.75,2.75 0 1,0 5.5,0a2.75,2.75 0 1,0 -5.5,0M912.25,480.5a2.75,2.75 0 1,0 5.5,0a2.75,2.75 0 1,0 -5.5,0M913.25,450.3a2.75,2.75 0 1,0 5.5,0a2.75,2.75 0 1,0 -5.5,0M914.65,438.2a2.75,2.75 0 1,0 5.5,0a2.75,2.75 0 1,0 -5.5,0M915.95,471.1a2.75,2.75 0 1,0 5.5,0a2.75,2.75 0 1,0 -5.5,0M917.35,465.5a2.75,2.75 0 1,0 5.5,0a2.75,2.75 0 1,0 -5.5,0M918.35,458.3a2.75,2.75 0 1,0 5.5,0a2.75,2.75 0 1,0 -5.5,0M919.75,411.0a2.75,2.75 0 1,0 5.5,0a2.75,2.75 0 1,0 -5.5,0M921.05,457.0a2.75,2.75 0 1,0 5.5,0a2.75,2.75 0 1,0 -5.5,0M922.35,442.2a2.75,2.75 0 1,0 5.5,0a2.75,2.75 0 1,0 -5.5,0M923.45,457.0a2.75,2.75 0 1,0 5.5,0a2.75,2.75 0 1,0 -5.5,0M924.75,436.9a2.75,2.75 0 1,0 5.5,0a2.75,2.75 0 1,0 -5.5,0M925.85,401.9a2.75,2.75 0 1,0 5.5,0a2.75,2.75 0 1,0 -5.5,0M927.15,485.0a2.75,2.75 0 1,0 5.5,0a2.75,2.75 0 1,0 -5.5,0M928.55,436.4a2.75,2.75 0 1,0 5.5,0a2.75,2.75 0 1,0 -5.5,0M929.65,496.5a2.75,2.75 0 1,0 5.5,0a2.75,2.75 0 1,0 -5.5,0M930.95,457.0a2.75,2.75 0 1,0 5.5,0a2.75,2.75 0 1,0 -5.5,0M932.05,429.4a2.75,2.75 0 1,0 5.5,0a2.75,2.75 0 1,0 -5.5,0M933.35,465.0a2.75,2.75 0 1,0 5.5,0a2.75,2.75 0 1,0 -5.5,0M934.65,431.3a2.75,2.75 0 1,0 5.5,0a2.75,2.75 0 1,0 -5.5,0M936.05,475.7a2.75,2.75 0 1,0 5.5,0a2.75,2.75 0 1,0 -5.5,0M937.05,463.6a2.75,2.75 0 1,0 5.5,0a2.75,2.75 0 1,0 -5.5,0M938.45,465.0a2.75,2.75 0 1,0 5.5,0a2.75,2.75 0 1,0 -5.5,0M939.45,459.6a2.75,2.75 0 1,0 5.5,0a2.75,2.75 0 1,0 -5.5,0M940.85,509.9a2.75,2.75 0 1,0 5.5,0a2.75,2.75 0 1,0 -5.5,0M942.15,450.8a2.75,2.75 0 1,0 5.5,0a2.75,2.75 0 1,0 -5.5,0M943.25,481.0a2.75,2.75 0 1,0 5.5,0a2.75,2.75 0 1,0 -5.5,0M944.55,460.2a2.75,2.75 0 1,0 5.5,0a2.75,2.75 0 1,0 -5.5,0M945.65,437.7a2.75,2.75 0 1,0 5.5,0a2.75,2.75 0 1,0 -5.5,0M946.75,490.4a2.75,2.75 0 1,0 5.5,0a2.75,2.75 0 1,0 -5.5,0M948.15,455.4a2.75,2.75 0 1,0 5.5,0a2.75,2.75 0 1,0 -5.5,0M949.15,466.1a2.75,2.75 0 1,0 5.5,0a2.75,2.75 0 1,0 -5.5,0M950.75,427.3a2.75,2.75 0 1,0 5.5,0a2.75,2.75 0 1,0 -5.5,0M952.35,436.7a2.75,2.75 0 1,0 5.5,0a2.75,2.75 0 1,0 -5.5,0M953.45,460.2a2.75,2.75 0 1,0 5.5,0a2.75,2.75 0 1,0 -5.5,0M954.55,472.2a2.75,2.75 0 1,0 5.5,0a2.75,2.75 0 1,0 -5.5,0M955.55,465.0a2.75,2.75 0 1,0 5.5,0a2.75,2.75 0 1,0 -5.5,0M956.95,446.0a2.75,2.75 0 1,0 5.5,0a2.75,2.75 0 1,0 -5.5,0M958.25,511.6a2.75,2.75 0 1,0 5.5,0a2.75,2.75 0 1,0 -5.5,0M959.65,450.9a2.75,2.75 0 1,0 5.5,0a2.75,2.75 0 1,0 -5.5,0M960.95,468.2a2.75,2.75 0 1,0 5.5,0a2.75,2.75 0 1,0 -5.5,0M962.05,471.4a2.75,2.75 0 1,0 5.5,0a2.75,2.75 0 1,0 -5.5,0M963.35,460.2a2.75,2.75 0 1,0 5.5,0a2.75,2.75 0 1,0 -5.5,0M964.65,457.5a2.75,2.75 0 1,0 5.5,0a2.75,2.75 0 1,0 -5.5,0M965.75,447.4a2.75,2.75 0 1,0 5.5,0a2.75,2.75 0 1,0 -5.5,0M967.05,452.7a2.75,2.75 0 1,0 5.5,0a2.75,2.75 0 1,0 -5.5,0M968.15,488.3a2.75,2.75 0 1,0 5.5,0a2.75,2.75 0 1,0 -5.5,0M969.45,458.1a2.75,2.75 0 1,0 5.5,0a2.75,2.75 0 1,0 -5.5,0M970.85,487.0a2.75,2.75 0 1,0 5.5,0a2.75,2.75 0 1,0 -5.5,0M971.95,459.7a2.75,2.75 0 1,0 5.5,0a2.75,2.75 0 1,0 -5.5,0M973.25,472.2a2.75,2.75 0 1,0 5.5,0a2.75,2.75 0 1,0 -5.5,0M974.55,454.9a2.75,2.75 0 1,0 5.5,0a2.75,2.75 0 1,0 -5.5,0M975.65,471.4a2.75,2.75 0 1,0 5.5,0a2.75,2.75 0 1,0 -5.5,0M976.95,523.6a2.75,2.75 0 1,0 5.5,0a2.75,2.75 0 1,0 -5.5,0M978.35,487.8a2.75,2.75 0 1,0 5.5,0a2.75,2.75 0 1,0 -5.5,0M979.65,466.1a2.75,2.75 0 1,0 5.5,0a2.75,2.75 0 1,0 -5.5,0M980.75,465.0a2.75,2.75 0 1,0 5.5,0a2.75,2.75 0 1,0 -5.5,0M982.05,458.3a2.75,2.75 0 1,0 5.5,0a2.75,2.75 0 1,0 -5.5,0M983.15,483.7a2.75,2.75 0 1,0 5.5,0a2.75,2.75 0 1,0 -5.5,0M984.45,451.4a2.75,2.75 0 1,0 5.5,0a2.75,2.75 0 1,0 -5.5,0M985.85,450.9a2.75,2.75 0 1,0 5.5,0a2.75,2.75 0 1,0 -5.5,0M987.15,449.0a2.75,2.75 0 1,0 5.5,0a2.75,2.75 0 1,0 -5.5,0M988.25,436.4a2.75,2.75 0 1,0 5.5,0a2.75,2.75 0 1,0 -5.5,0M989.85,455.4a2.75,2.75 0 1,0 5.5,0a2.75,2.75 0 1,0 -5.5,0M990.85,452.7a2.75,2.75 0 1,0 5.5,0a2.75,2.75 0 1,0 -5.5,0M991.95,477.6a2.75,2.75 0 1,0 5.5,0a2.75,2.75 0 1,0 -5.5,0M993.25,473.0a2.75,2.75 0 1,0 5.5,0a2.75,2.75 0 1,0 -5.5,0M994.35,453.5a2.75,2.75 0 1,0 5.5,0a2.75,2.75 0 1,0 -5.5,0M995.65,471.4a2.75,2.75 0 1,0 5.5,0a2.75,2.75 0 1,0 -5.5,0M997.05,483.7a2.75,2.75 0 1,0 5.5,0a2.75,2.75 0 1,0 -5.5,0M998.35,481.6a2.75,2.75 0 1,0 5.5,0a2.75,2.75 0 1,0 -5.5,0M999.45,432.9a2.75,2.75 0 1,0 5.5,0a2.75,2.75 0 1,0 -5.5,0M1000.75,462.9a2.75,2.75 0 1,0 5.5,0a2.75,2.75 0 1,0 -5.5,0M1001.85,495.0a2.75,2.75 0 1,0 5.5,0a2.75,2.75 0 1,0 -5.5,0M1003.15,496.8a2.75,2.75 0 1,0 5.5,0a2.75,2.75 0 1,0 -5.5,0M1004.55,463.7a2.75,2.75 0 1,0 5.5,0a2.75,2.75 0 1,0 -5.5,0M1005.55,449.0a2.75,2.75 0 1,0 5.5,0a2.75,2.75 0 1,0 -5.5,0M1006.95,489.6a2.75,2.75 0 1,0 5.5,0a2.75,2.75 0 1,0 -5.5,0M1008.25,450.9a2.75,2.75 0 1,0 5.5,0a2.75,2.75 0 1,0 -5.5,0M1009.35,480.5a2.75,2.75 0 1,0 5.5,0a2.75,2.75 0 1,0 -5.5,0M1010.65,449.0a2.75,2.75 0 1,0 5.5,0a2.75,2.75 0 1,0 -5.5,0M1011.75,444.2a2.75,2.75 0 1,0 5.5,0a2.75,2.75 0 1,0 -5.5,0M1013.05,474.1a2.75,2.75 0 1,0 5.5,0a2.75,2.75 0 1,0 -5.5,0M1014.45,444.2a2.75,2.75 0 1,0 5.5,0a2.75,2.75 0 1,0 -5.5,0M1015.45,484.8a2.75,2.75 0 1,0 5.5,0a2.75,2.75 0 1,0 -5.5,0M1016.85,476.8a2.75,2.75 0 1,0 5.5,0a2.75,2.75 0 1,0 -5.5,0M1017.85,458.6a2.75,2.75 0 1,0 5.5,0a2.75,2.75 0 1,0 -5.5,0M1019.25,481.6a2.75,2.75 0 1,0 5.5,0a2.75,2.75 0 1,0 -5.5,0M1020.55,512.9a2.75,2.75 0 1,0 5.5,0a2.75,2.75 0 1,0 -5.5,0M1021.65,484.3a2.75,2.75 0 1,0 5.5,0a2.75,2.75 0 1,0 -5.5,0M1022.95,453.5a2.75,2.75 0 1,0 5.5,0a2.75,2.75 0 1,0 -5.5,0M1024.35,476.3a2.75,2.75 0 1,0 5.5,0a2.75,2.75 0 1,0 -5.5,0M1025.35,474.9a2.75,2.75 0 1,0 5.5,0a2.75,2.75 0 1,0 -5.5,0M1026.75,478.9a2.75,2.75 0 1,0 5.5,0a2.75,2.75 0 1,0 -5.5,0M1028.05,473.6a2.75,2.75 0 1,0 5.5,0a2.75,2.75 0 1,0 -5.5,0M1029.15,463.4a2.75,2.75 0 1,0 5.5,0a2.75,2.75 0 1,0 -5.5,0M1030.45,498.4a2.75,2.75 0 1,0 5.5,0a2.75,2.75 0 1,0 -5.5,0M1031.55,492.3a2.75,2.75 0 1,0 5.5,0a2.75,2.75 0 1,0 -5.5,0M1032.85,472.2a2.75,2.75 0 1,0 5.5,0a2.75,2.75 0 1,0 -5.5,0M1034.25,496.8a2.75,2.75 0 1,0 5.5,0a2.75,2.75 0 1,0 -5.5,0M1035.55,506.5a2.75,2.75 0 1,0 5.5,0a2.75,2.75 0 1,0 -5.5,0M1036.65,468.0a2.75,2.75 0 1,0 5.5,0a2.75,2.75 0 1,0 -5.5,0M1037.95,477.9a2.75,2.75 0 1,0 5.5,0a2.75,2.75 0 1,0 -5.5,0M1039.05,473.6a2.75,2.75 0 1,0 5.5,0a2.75,2.75 0 1,0 -5.5,0M1040.35,473.6a2.75,2.75 0 1,0 5.5,0a2.75,2.75 0 1,0 -5.5,0M1041.65,485.6a2.75,2.75 0 1,0 5.5,0a2.75,2.75 0 1,0 -5.5,0M1042.75,444.2a2.75,2.75 0 1,0 5.5,0a2.75,2.75 0 1,0 -5.5,0M1044.05,491.8a2.75,2.75 0 1,0 5.5,0a2.75,2.75 0 1,0 -5.5,0M1045.45,445.5a2.75,2.75 0 1,0 5.5,0a2.75,2.75 0 1,0 -5.5,0M1046.75,445.0a2.75,2.75 0 1,0 5.5,0a2.75,2.75 0 1,0 -5.5,0M1047.85,507.8a2.75,2.75 0 1,0 5.5,0a2.75,2.75 0 1,0 -5.5,0M1049.15,487.0a2.75,2.75 0 1,0 5.5,0a2.75,2.75 0 1,0 -5.5,0M1050.55,473.6a2.75,2.75 0 1,0 5.5,0a2.75,2.75 0 1,0 -5.5,0M1051.55,487.8a2.75,2.75 0 1,0 5.5,0a2.75,2.75 0 1,0 -5.5,0M1052.95,503.8a2.75,2.75 0 1,0 5.5,0a2.75,2.75 0 1,0 -5.5,0M1054.25,520.1a2.75,2.75 0 1,0 5.5,0a2.75,2.75 0 1,0 -5.5,0M1055.35,469.0a2.75,2.75 0 1,0 5.5,0a2.75,2.75 0 1,0 -5.5,0M1056.65,487.0a2.75,2.75 0 1,0 5.5,0a2.75,2.75 0 1,0 -5.5,0M1057.75,512.1a2.75,2.75 0 1,0 5.5,0a2.75,2.75 0 1,0 -5.5,0M1059.05,457.3a2.75,2.75 0 1,0 5.5,0a2.75,2.75 0 1,0 -5.5,0M1060.45,493.6a2.75,2.75 0 1,0 5.5,0a2.75,2.75 0 1,0 -5.5,0M1061.45,467.4a2.75,2.75 0 1,0 5.5,0a2.75,2.75 0 1,0 -5.5,0M1062.85,477.1a2.75,2.75 0 1,0 5.5,0a2.75,2.75 0 1,0 -5.5,0M1064.15,467.7a2.75,2.75 0 1,0 5.5,0a2.75,2.75 0 1,0 -5.5,0M1065.25,505.1a2.75,2.75 0 1,0 5.5,0a2.75,2.75 0 1,0 -5.5,0M1066.55,496.8a2.75,2.75 0 1,0 5.5,0a2.75,2.75 0 1,0 -5.5,0M1067.85,499.0a2.75,2.75 0 1,0 5.5,0a2.75,2.75 0 1,0 -5.5,0M1068.95,478.1a2.75,2.75 0 1,0 5.5,0a2.75,2.75 0 1,0 -5.5,0M1070.25,514.5a2.75,2.75 0 1,0 5.5,0a2.75,2.75 0 1,0 -5.5,0M1071.65,496.8a2.75,2.75 0 1,0 5.5,0a2.75,2.75 0 1,0 -5.5,0M1072.75,473.6a2.75,2.75 0 1,0 5.5,0a2.75,2.75 0 1,0 -5.5,0M1074.05,472.5a2.75,2.75 0 1,0 5.5,0a2.75,2.75 0 1,0 -5.5,0M1075.35,487.5a2.75,2.75 0 1,0 5.5,0a2.75,2.75 0 1,0 -5.5,0" fill="#1f77b4"/>
<g font-family="Liberation Sans, sans-serif" font-size="10.5" fill="#9a9a9a" text-anchor="end">
<text x="470.6" y="276.5">49.1295p</text>
<text x="470.6" y="334.5">49.129p</text>
<text x="470.6" y="392.5">49.1285p</text>
<text x="470.6" y="450.5">49.128p</text>
<text x="470.6" y="508.5">49.1275p</text>
<text x="470.6" y="567.5">49.127p</text>
</g>
<g font-family="Liberation Sans, sans-serif" font-size="10.5" fill="#9a9a9a" text-anchor="end">
<text transform="translate(474.8,602.7) rotate(-30)">−10</text>
<text transform="translate(573.8,602.7) rotate(-30)">0</text>
<text transform="translate(672.8,602.7) rotate(-30)">10</text>
<text transform="translate(770.8,602.7) rotate(-30)">20</text>
<text transform="translate(870.8,602.7) rotate(-30)">30</text>
<text transform="translate(969.8,602.7) rotate(-30)">40</text>
<text transform="translate(1068.8,602.7) rotate(-30)">50</text>
</g>
<text x="792" y="622" font-family="Liberation Sans, sans-serif" font-size="13" fill="#9a9a9a" text-anchor="middle">time [sec]</text>
<text transform="translate(435.3,412) rotate(-90)" font-family="Liberation Sans, sans-serif" font-size="13" fill="#9a9a9a" text-anchor="middle" letter-spacing="0.5">|C| [F]</text>
<path d="M1130.1,246.2h25.3" stroke="#1f77b4" stroke-width="1.9"/>
<circle cx="1142.8" cy="246.2" r="2.6" fill="#1f77b4"/>
<text x="1159.6" y="249.9" font-family="Liberation Sans, sans-serif" font-size="10.6" fill="#4a4a4a" textLength="54" lengthAdjust="spacingAndGlyphs">MAIN PORT</text>

</svg>

<!-- right -->
<div class="a" style="left:1285px;top:102.5px;width:330px;height:633.5px;background:#4d4d4d;border-radius:8px;box-shadow:-1px 2px 5px rgba(0,0,0,.36)"></div>
<svg class="a" style="left:1392px;top:14px" width="54" height="44" viewBox="1392 14 54 44" fill="none" stroke="#d2d2d2" stroke-width="1.9" stroke-linecap="round" stroke-linejoin="round">
<path d="M1396.53,49.47C1397.16,49.76 1398.88,51.02 1400.31,51.19C1401.75,51.36 1403.41,51.30 1405.13,50.50C1406.84,49.70 1408.96,47.75 1410.63,46.38C1412.29,45.00 1413.95,43.17 1415.09,42.25C1416.24,41.33 1416.64,41.68 1417.50,40.88C1418.36,40.07 1419.11,39.27 1420.25,37.44C1421.40,35.60 1422.89,32.22 1424.38,29.88C1425.87,27.53 1427.47,24.89 1429.19,23.34C1430.91,21.80 1432.80,20.94 1434.69,20.59C1436.58,20.25 1439.56,21.17 1440.53,21.28"/>
<path d="M1396.53,49.47C1396.82,48.50 1397.39,45.29 1398.25,43.63C1399.11,41.96 1400.54,40.36 1401.69,39.50C1402.83,38.64 1403.75,38.47 1405.13,38.47C1406.50,38.47 1408.28,38.87 1409.94,39.50C1411.60,40.13 1413.60,41.11 1415.09,42.25C1416.58,43.40 1417.56,45.23 1418.88,46.38C1420.19,47.52 1421.63,48.78 1423.00,49.13C1424.38,49.47 1425.87,49.24 1427.13,48.44C1428.39,47.64 1429.42,46.26 1430.56,44.31C1431.71,42.37 1432.86,39.50 1434.00,36.75C1435.15,34.00 1436.35,30.39 1437.44,27.81C1438.53,25.23 1440.02,22.37 1440.53,21.28"/>
<path d="M1396.53,49.47C1397.73,48.73 1401.40,46.32 1403.75,45.00C1406.10,43.68 1408.10,42.48 1410.63,41.56C1413.15,40.65 1416.35,40.19 1418.88,39.50C1421.40,38.81 1423.69,38.35 1425.75,37.44C1427.81,36.52 1429.65,35.26 1431.25,34.00C1432.86,32.74 1434.23,31.25 1435.38,29.88C1436.52,28.50 1437.35,27.07 1438.13,25.75C1438.91,24.43 1439.73,22.60 1440.05,21.97"/>
</svg>
<div class="a" style="left:1441.65px;top:12px;font-size:25.5px;color:#d4d4d4;transform-origin:0 0;transform:scaleX(1.0228);">scio</div>
<div class="a" style="left:1441.66px;top:28px;font-size:25.5px;color:#d4d4d4;transform-origin:0 0;transform:scaleX(0.9994);">spec</div>
<svg class="a" style="left:1510px;top:4px" width="80" height="18" viewBox="1510 4 80 18" fill="none" stroke="#fff">
<path d="M1514.2,13.1h10.4" stroke-width="1.8"/>
<rect x="1543.7" y="7.9" width="8.8" height="8.6" rx="1.8" stroke-width="1.4"/>
<path d="M1573,9.6l8.6,8.6M1581.6,9.6l-8.6,8.6" stroke-width="1.9"/>
</svg>
<svg class="a" style="left:1526px;top:20px" width="60" height="29" viewBox="1526 20 60 29">
<circle cx="1540.6" cy="33.3" r="10.4" fill="none" stroke="#d0d0d0" stroke-width="2.3"/>
<circle cx="1540.6" cy="29.4" r="1.5" fill="#d8d8d8"/><path d="M1538,32h4v5.4h1.5v1.4h-5.7v-1.4h1.7v-4h-1.5z" fill="#d8d8d8"/>
<circle cx="1572.55" cy="33.25" r="10.3" fill="#9b9b9b"/>
<text transform="translate(1572.8,41) scale(0.74,1)" font-family="Liberation Sans, sans-serif" font-size="20.5" fill="#f2f2f2" stroke="#f2f2f2" stroke-width="0.3" text-anchor="middle">?</text>
</svg>
<div class="a" style="left:1309.38px;top:110px;font-size:13.0px;color:#dcdcdc;transform-origin:0 0;transform:scaleX(1.0610);">Status</div>
<div class="a" style="left:1310px;top:125.1px;width:38.4px;height:1.8px;background:#dcdc14"></div>
<div class="a" style="left:1364.15px;top:110px;font-size:13.5px;color:#cdcdcd;transform-origin:0 0;transform:scaleX(1.0638);">Log</div>
<svg class="a" style="left:1575px;top:107px" width="18" height="16" viewBox="1575 107 18 16"><path d="M1577.3,108.6V121.8" stroke="#7a7a7a" stroke-width="1.6"/><path d="M1591.4,115.2L1585,108.8V113H1580.5V117.4H1585V121.6Z" fill="#7a7a7a"/></svg>
<div class="a" style="left:1404.59px;top:211px;font-size:13.5px;color:#9c9c9c;transform-origin:0 0;transform:scaleX(1.0550);">total progress</div>
<div class="a" style="left:1363.2px;top:254.2px;width:168.8px;height:18.8px;border:1.2px solid #b4b4b4;border-radius:4px;overflow:hidden"><div style="width:94.2px;height:100%;background:#dcdc14"></div></div>
<div class="a" style="left:1404.92px;top:303px;font-size:11.5px;color:#bdbdbd;transform-origin:0 0;transform:scaleX(1.0494);">time Since Start</div>
<div class="a" style="left:1394.44px;top:324px;font-size:27px;color:#b0b0b0;transform-origin:0 0;transform:scaleX(0.9851);">00:00:51</div>
<div class="a" style="left:1406.41px;top:384px;font-size:12.0px;color:#bdbdbd;transform-origin:0 0;transform:scaleX(1.0584);">time remaining</div>
<div class="a" style="left:1437.91px;top:405px;font-size:24px;color:#cacaca;transform-origin:0 0;transform:scaleX(1.1310);">∞</div>
<div class="a" style="left:1428.76px;top:466px;font-size:13.0px;color:#bdbdbd;transform-origin:0 0;transform:scaleX(1.0380);">cycles</div>
<div class="a" style="left:1410.16px;top:498px;font-size:27px;color:#b0b0b0;transform-origin:0 0;transform:scaleX(1.0075);">407/</div>
<div class="a" style="left:1465.51px;top:498px;font-size:24px;color:#b0b0b0;transform-origin:0 0;transform:scaleX(1.1310);">∞</div>
<div class="a" style="left:1276px;top:742px;width:320px;height:3px;background:#7a7a7a"></div>
<div class="a" style="left:1283.59px;top:749px;font-size:20.5px;color:#ededed;transform-origin:0 0;transform:scaleX(1.0615);">measurement control</div>
<svg class="a" style="left:1520px;top:748px" width="10" height="20" viewBox="1520 748 10 20" fill="#dedede"><circle cx="1524.5" cy="752.9" r="2.15"/><circle cx="1524.5" cy="758.55" r="2.15"/><circle cx="1524.5" cy="764.2" r="2.15"/></svg>
<div class="a" style="left:1283.61px;top:777px;font-size:14.5px;color:#dcdc14;transform-origin:0 0;transform:scaleX(1.0539);-webkit-text-stroke:.2px #dcdc14;">normal</div>
<div class="a" style="left:1284.42px;top:799px;font-size:11.5px;color:#b4b4b4;transform-origin:0 0;transform:scaleX(1.0596);">time per data set and channel: 189.06 ms</div>
<div class="a" style="left:1545.2px;top:753.1px;width:41.6px;height:41.7px;border:7.3px solid #dcdc14;border-bottom-width:7.9px;border-radius:4.5px"></div>
<div class="a" style="left:1554.68px;top:801px;font-size:12.0px;color:#dcdc14;transform-origin:0 0;transform:scaleX(1.0639);">stop</div>


<!-- status bar -->
<div class="a" style="left:0;top:835px;width:1600px;height:1px;background:#6e6e6e"></div>
<svg class="a" style="left:4px;top:837px" width="28" height="21" viewBox="4 837 28 21" fill="none" stroke="#d2d2d2" stroke-width="1.05" stroke-linecap="round" stroke-linejoin="round">
<path d="M6.72,854.59C7.02,854.73 7.87,855.34 8.57,855.43C9.27,855.51 10.08,855.48 10.93,855.09C11.77,854.70 12.81,853.74 13.62,853.07C14.44,852.40 15.25,851.50 15.81,851.05C16.37,850.60 16.57,850.77 16.99,850.37C17.41,849.98 17.78,849.59 18.34,848.69C18.90,847.79 19.63,846.14 20.36,844.98C21.09,843.83 21.88,842.54 22.72,841.78C23.56,841.03 24.49,840.60 25.41,840.44C26.34,840.27 27.80,840.72 28.28,840.77"/>
<path d="M6.72,854.59C6.86,854.11 7.14,852.54 7.56,851.72C7.98,850.91 8.68,850.12 9.24,849.70C9.80,849.28 10.25,849.20 10.93,849.20C11.60,849.20 12.47,849.39 13.28,849.70C14.10,850.01 15.08,850.49 15.81,851.05C16.54,851.61 17.02,852.51 17.66,853.07C18.31,853.63 19.01,854.25 19.69,854.42C20.36,854.59 21.09,854.47 21.71,854.08C22.32,853.69 22.83,853.01 23.39,852.06C23.95,851.10 24.51,849.70 25.08,848.35C25.64,847.01 26.23,845.24 26.76,843.97C27.29,842.71 28.02,841.31 28.28,840.77"/>
<path d="M6.72,854.59C7.30,854.22 9.10,853.04 10.25,852.40C11.40,851.75 12.39,851.16 13.62,850.71C14.86,850.26 16.43,850.04 17.66,849.70C18.90,849.36 20.02,849.14 21.03,848.69C22.04,848.24 22.94,847.62 23.73,847.01C24.51,846.39 25.19,845.66 25.75,844.98C26.31,844.31 26.72,843.61 27.10,842.96C27.48,842.32 27.88,841.42 28.04,841.11"/>
</svg>
<div class="a" style="left:79.50px;top:843px;font-size:10.5px;color:#9a9a9a;transform-origin:0 0;transform:scaleX(1.0610);">Sciospec v0.4.11</div>
<div class="a" style="left:302.55px;top:843px;font-size:11.0px;color:#9a9a9a;transform-origin:0 0;transform:scaleX(1.0302);">connected to USB/FS</div>
<div class="a" style="left:504.55px;top:843px;font-size:11.0px;color:#9a9a9a;transform-origin:0 0;transform:scaleX(1.0339);">device status: measure</div>

</div></body></html>
